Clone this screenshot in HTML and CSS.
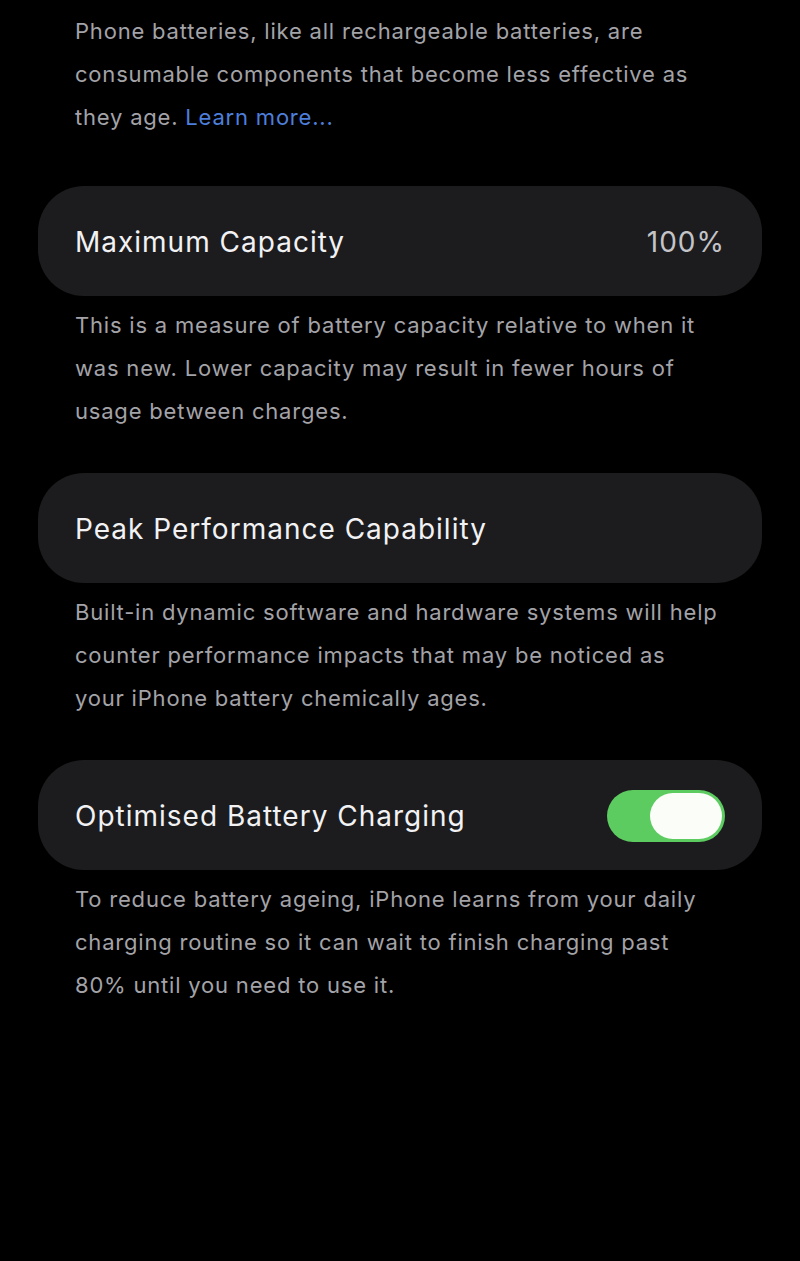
FILE: index.html
```html
<!DOCTYPE html>
<html>
<head>
<meta charset="utf-8">
<link rel="stylesheet" href="styles.css">
</head>
<body>
<div class="page">
  <p class="note intro">Phone batteries, like all rechargeable batteries, are<br>consumable components that become less effective as<br>they age. <span class="link">Learn more...</span></p>

  <div class="card">
    <span class="title">Maximum Capacity</span>
    <span class="value">100%</span>
  </div>
  <p class="note">This is a measure of battery capacity relative to when it<br>was new. Lower capacity may result in fewer hours of<br>usage between charges.</p>

  <div class="card">
    <span class="title">Peak Performance Capability</span>
  </div>
  <p class="note">Built-in dynamic software and hardware systems will help<br>counter performance impacts that may be noticed as<br>your iPhone battery chemically ages.</p>

  <div class="card">
    <span class="title">Optimised Battery Charging</span>
    <span class="toggle"><span class="knob"></span></span>
  </div>
  <p class="note">To reduce battery ageing, iPhone learns from your daily<br>charging routine so it can wait to finish charging past<br>80% until you need to use it.</p>
</div>
</body>
</html>
```

FILE: styles.css
```css
html, body {
  margin: 0;
  padding: 0;
  background: #000;
}
body {
  font-family: Inter, "Noto Sans", "Liberation Sans", sans-serif;
  -webkit-font-smoothing: antialiased;
}
.page {
  width: 800px;
  height: 1261px;
  box-sizing: border-box;
  padding: 10px 38px 0 38px;
  display: flex;
  flex-direction: column;
}
.note {
  margin: 0;
  padding: 0 0 0 37px;
  color: #a3a3a8;
  font-size: 22px;
  line-height: 43px;
  letter-spacing: 0.8px;
  white-space: nowrap;
}
.intro {
  margin-bottom: 47px;
}
.link {
  color: #4d7fdc;
}
.card {
  height: 110px;
  border-radius: 46px;
  background: #1c1c1e;
  display: flex;
  align-items: center;
  justify-content: space-between;
  padding: 2px 37px 0 37px;
  box-sizing: border-box;
  margin-bottom: 8px;
}
.card + .note {
  margin-bottom: 40px;
}
.title {
  color: #f2f2f4;
  font-size: 28px;
  letter-spacing: 1px;
}
.value {
  color: #c4c4c8;
  font-size: 28px;
  letter-spacing: 1px;
}
.toggle {
  width: 118px;
  height: 52px;
  border-radius: 26px;
  background: #5ccb60;
  display: flex;
  align-items: center;
  justify-content: flex-end;
  padding: 0 3px;
  box-sizing: border-box;
}
.knob {
  width: 72px;
  height: 46px;
  border-radius: 23px;
  background: #fbfdf9;
}
```
